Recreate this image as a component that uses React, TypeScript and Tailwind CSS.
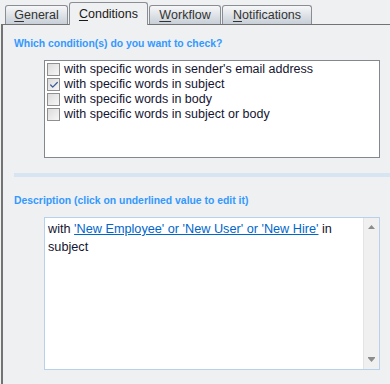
import { Check } from 'lucide-react';

const tabs = [
  { key: 'General', first: 'G', rest: 'eneral', w: 'w-[63px]' },
  { key: 'Conditions', first: 'C', rest: 'onditions', w: 'w-[79px]' },
  { key: 'Workflow', first: 'W', rest: 'orkflow', w: 'w-[72px]' },
  { key: 'Notifications', first: 'N', rest: 'otifications', w: 'w-[90px]' },
];

const conditions = [
  { label: "with specific words in sender's email address", checked: false },
  { label: 'with specific words in subject', checked: true },
  { label: 'with specific words in body', checked: false },
  { label: 'with specific words in subject or body', checked: false },
];

function Box({ checked }: { checked: boolean }) {
  return (
    <div className="w-[13px] h-[13px] border border-[#8f8f8f] bg-gradient-to-br from-[#dcdcdc] to-[#f7f7f7] flex items-center justify-center shrink-0">
      {checked && <Check className="w-[10px] h-[10px] text-[#3d5a99]" strokeWidth={3} />}
    </div>
  );
}

export default function App() {
  return (
    <div className="w-[390px] h-[384px] bg-[#eff0f2] flex flex-col overflow-hidden font-['Liberation_Sans',sans-serif]">
      {/* tab strip */}
      <div className="flex items-end pl-[5px] pt-[2px] h-[24px] gap-px">
        {tabs.map((t) =>
          t.key === 'Conditions' ? (
            <div
              key={t.key}
              className={`${t.w} h-[23px] -mb-px relative z-10 bg-[#eff0f2] border border-b-0 border-[#8a8e94] rounded-t-[3px] flex items-center justify-center text-[12.5px] text-[#1a1a1a]`}
            >
              <span className="underline underline-offset-2">{t.first}</span>
              {t.rest}
            </div>
          ) : (
            <div
              key={t.key}
              className={`${t.w} h-[19px] bg-gradient-to-b from-[#f6f7f8] to-[#c8cfd7] border border-b-0 border-[#8a8e94] rounded-t-[3px] flex items-center justify-center text-[12.5px] text-[#333]`}
            >
              <span className="underline underline-offset-2">{t.first}</span>
              {t.rest}
            </div>
          )
        )}
      </div>

      {/* panel */}
      <div className="flex-1 ml-px border-l-2 border-t border-[#737373] bg-[#eff0f2] pl-[11px]">
        <div className="pt-[12px] text-[10.4px] font-bold text-[#3399ff] leading-[13px]">
          Which condition(s) do you want to check?
        </div>

        <div className="ml-[30px] mt-[10px] w-[336px] h-[98px] bg-white border border-[#828790] pt-[1px] pl-[2px]">
          {conditions.map((c) => (
            <div key={c.label} className="flex items-center h-[15px] gap-[4px]">
              <Box checked={c.checked} />
              <span className="text-[12.5px] text-[#141430] leading-[15px]">{c.label}</span>
            </div>
          ))}
        </div>

        <div className="mt-[15px] h-[4px] bg-[#d7e4f1]" />

        <div className="mt-[17px] text-[10.4px] font-bold text-[#3399ff] leading-[13px]">
          Description (click on underlined value to edit it)
        </div>

        <div className="ml-[30px] mt-[10px] w-[336px] h-[153px] bg-white border border-[#b7d0eb] flex">
          <div className="flex-1 pl-[3px] pt-[2px] text-[12.7px] leading-[18px] text-[#141430]">
            <div>
              with{' '}
              <span className="text-[#0066cc] underline">
                'New Employee' or 'New User' or 'New Hire'
              </span>{' '}
              in
            </div>
            <div>subject</div>
          </div>
          <div className="w-[16px] bg-[#f0f0f0] border-l border-[#e4e4e4] flex flex-col items-center justify-between py-[7px]">
            <svg width="7" height="4" viewBox="0 0 7 4">
              <path d="M3.5 0 L7 4 L0 4 Z" fill="#8c8c8c" />
            </svg>
            <svg width="7" height="5" viewBox="0 0 7 5">
              <rect x="0" y="0" width="7" height="1" fill="#8c8c8c" />
              <path d="M0 1 L7 1 L3.5 5 Z" fill="#8c8c8c" />
            </svg>
          </div>
        </div>
      </div>
    </div>
  );
}
